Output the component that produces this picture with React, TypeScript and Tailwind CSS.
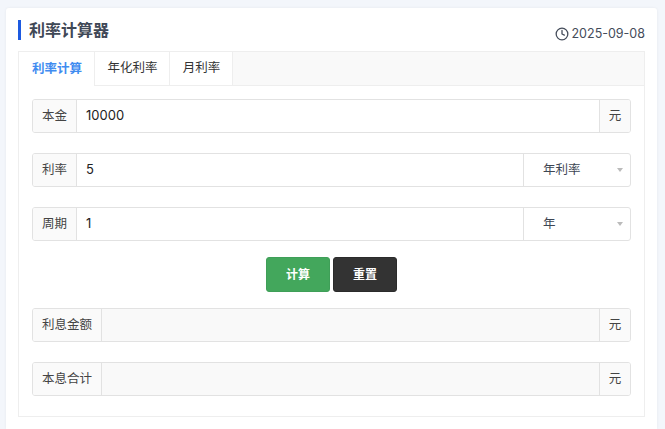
import React from "react";

function Addon({ children, className = "" }: { children: React.ReactNode; className?: string }) {
  return (
    <div className={`flex h-full shrink-0 items-center justify-center bg-[#fafafa] text-[12.5px] text-[#444] ${className}`}>
      {children}
    </div>
  );
}

function Caret() {
  return <span className="absolute right-[7px] top-[14px] h-0 w-0 border-x-[3px] border-t-[4px] border-x-transparent border-t-[#bbb]" />;
}

function Group({ children }: { children: React.ReactNode }) {
  return (
    <div className="flex h-[34px] items-stretch overflow-hidden rounded-[3px] border border-[#e2e2e2] bg-white">
      {children}
    </div>
  );
}

function Select({ value }: { value: string }) {
  return (
    <div className="relative flex w-[107px] shrink-0 items-center border-l border-[#e2e2e2] pl-[19px] text-[12.5px] text-[#3d4653]">
      {value}
      <Caret />
    </div>
  );
}

function Value({ children }: { children: React.ReactNode }) {
  return <div className="flex flex-1 items-center pb-px pl-[9px] text-[13px] text-[#222]">{children}</div>;
}

export default function App() {
  return (
    <div className="h-[429px] overflow-hidden bg-[#f3f6fb] pl-[6px] pr-2 pt-2 [font-family:Inter,'Noto_Sans_CJK_SC',sans-serif]">
      <div className="rounded-t-[3px] bg-white px-3 pb-3 pt-3 shadow-[0_0_3px_rgba(0,0,0,0.06)]">
        <div className="flex h-[31px] items-start justify-between">
          <h1 className="flex h-5 items-center border-l-[3px] border-[#1d5ae0] pl-2 text-[16px] font-bold text-[#3f4856]">
            利率计算器
          </h1>
          <div className="mt-[4px] flex items-center gap-[3px] text-[12.5px] leading-5 text-[#444c5a]">
            <svg width="14" height="14" viewBox="0 0 24 24" fill="none" stroke="currentColor" strokeWidth="2.2" strokeLinecap="round" strokeLinejoin="round">
              <circle cx="12" cy="12" r="10" />
              <path d="M12 6v6l4 2" />
            </svg>
            <span>2025-09-08</span>
          </div>
        </div>

        <div className="border border-[#eeeeee]">
          <div className="flex h-[34px] border-b border-[#eeeeee] bg-[#f9f9f9] text-[12.5px]">
            <div className="-mb-px flex w-[76px] items-center justify-center border-r border-[#eeeeee] bg-white pl-px font-bold text-[#3f8cf0]">
              利率计算
            </div>
            <div className="flex w-[75px] items-center justify-center border-r border-[#eeeeee] bg-white pl-px text-[#333]">
              年化利率
            </div>
            <div className="flex w-[63px] items-center justify-center border-r border-[#eeeeee] bg-white pl-px text-[#333]">
              月利率
            </div>
          </div>

          <div className="flex flex-col gap-5 px-[13px] pb-5 pt-[13px]">
            <Group>
              <Addon className="w-[44px] border-r border-[#e2e2e2]">本金</Addon>
              <Value>10000</Value>
              <Addon className="w-[31px] border-l border-[#e2e2e2]">元</Addon>
            </Group>
            <Group>
              <Addon className="w-[44px] border-r border-[#e2e2e2]">利率</Addon>
              <Value>5</Value>
              <Select value="年利率" />
            </Group>
            <Group>
              <Addon className="w-[44px] border-r border-[#e2e2e2]">周期</Addon>
              <Value>1</Value>
              <Select value="年" />
            </Group>

            <div className="-my-1 flex justify-center gap-[3px] text-[12px] font-bold text-white">
              <button className="h-[35px] w-[64px] rounded-[3px] border border-[#3f9f58] bg-[#43a75c]">计算</button>
              <button className="h-[35px] w-[64px] rounded-[3px] border border-[#2b2b2b] bg-[#333333]">重置</button>
            </div>

            <Group>
              <Addon className="w-[69px] border-r border-[#e2e2e2]">利息金额</Addon>
              <div className="flex-1 bg-[#f9f9f9]" />
              <Addon className="w-[31px] border-l border-[#e2e2e2]">元</Addon>
            </Group>
            <Group>
              <Addon className="w-[69px] border-r border-[#e2e2e2]">本息合计</Addon>
              <div className="flex-1 bg-[#f9f9f9]" />
              <Addon className="w-[31px] border-l border-[#e2e2e2]">元</Addon>
            </Group>
          </div>
        </div>
      </div>
    </div>
  );
}
